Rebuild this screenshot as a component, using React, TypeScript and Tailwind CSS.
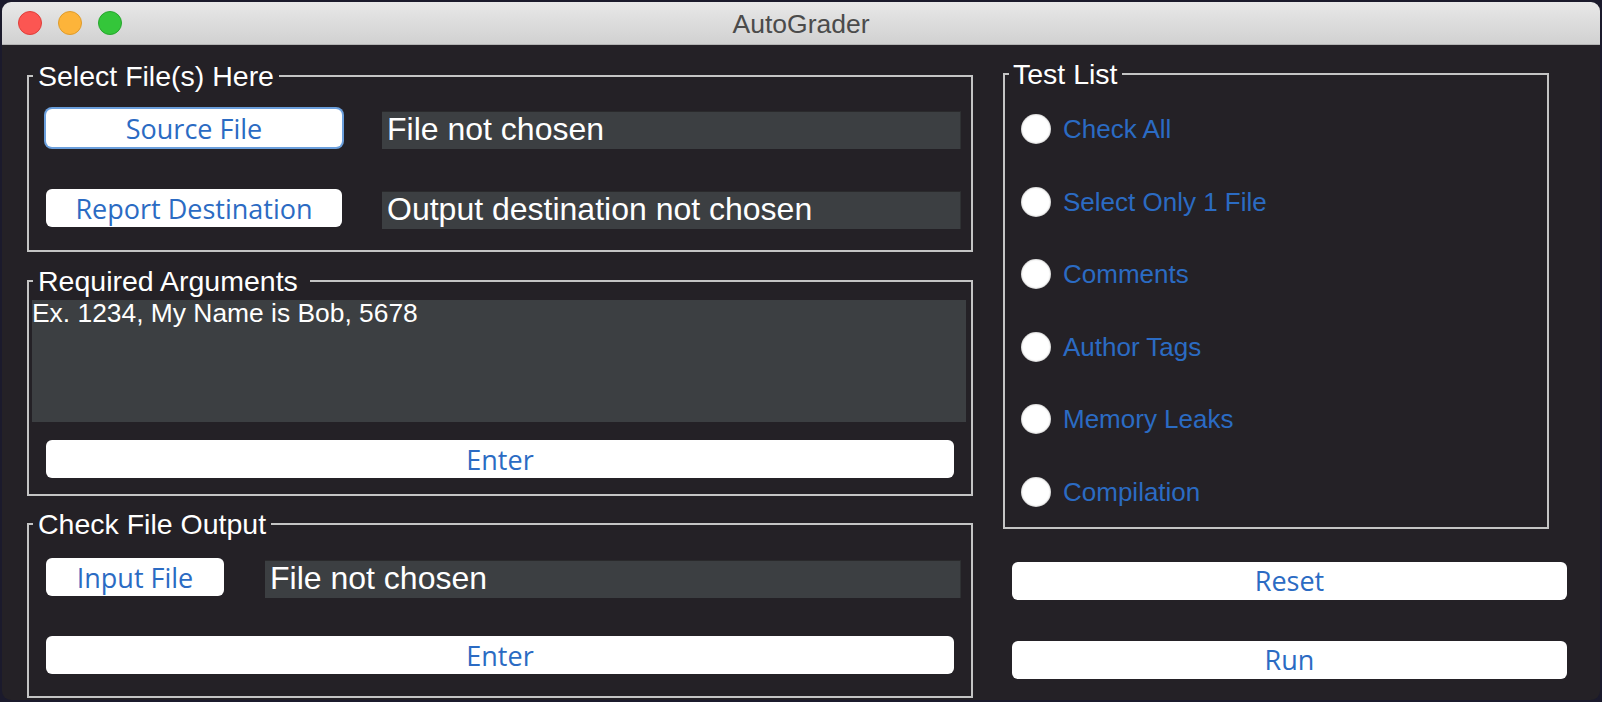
const sans = "font-['Liberation_Sans',Arial,sans-serif]";
const lucida = "font-['Open_Sans','DejaVu_Sans',sans-serif]";

const tests = ['Check All', 'Select Only 1 File', 'Comments', 'Author Tags', 'Memory Leaks', 'Compilation'];

function MacButton({ label, className = '', focused = false }: { label: string; className?: string; focused?: boolean }) {
  return (
    <button
      className={`h-[38px] bg-white rounded-[6px] flex items-center justify-center text-[#2b6bc3] text-[27px] leading-none ${lucida} ${
        focused ? 'ring-2 ring-[#6b9fdc]' : ''
      } ${className}`}
    >
      {label}
    </button>
  );
}

function Field({ text, className = '' }: { text: string; className?: string }) {
  return (
    <div
      className={`h-[38px] bg-[#3c3f42] border-t border-[#2a2a2c] border-r border-r-[#2f3133] pl-[5px] pt-[1px] text-white text-[32px] leading-none whitespace-nowrap ${sans} ${className}`}
    >
      {text}
    </div>
  );
}

function Group({ title, children, className = '', titlePad = 'pl-[5px] pr-[5px]' }: { title: string; children: React.ReactNode; className?: string; titlePad?: string }) {
  return (
    <fieldset className={`border-2 border-[#c4c4c4] p-0 m-0 min-w-0 ${className}`}>
      <legend className={`ml-[4px] ${titlePad} text-[28.5px] leading-[32px] text-white ${sans}`}>{title}</legend>
      {children}
    </fieldset>
  );
}

export default function App() {
  return (
    <div className="w-[1602px] h-[702px] bg-[#1b1a2c] pt-[2px] px-[2px] overflow-hidden">
      <div className="h-[698px] rounded-[9px] overflow-hidden bg-[#242126] flex flex-col">
        {/* Title bar */}
        <div className="relative h-[43px] shrink-0 bg-gradient-to-b from-[#e8e8e8] to-[#d1d1d1] border-b border-[#b3b3b3] flex items-center">
          <div className="flex items-center gap-[16px] pl-[16px]">
            <span className="w-[24px] h-[24px] rounded-full bg-[#fc5652] border border-[#df3e3a]" />
            <span className="w-[24px] h-[24px] rounded-full bg-[#fdb43a] border border-[#de9b2c]" />
            <span className="w-[24px] h-[24px] rounded-full bg-[#34c63a] border border-[#27a52e]" />
          </div>
          <div className={`absolute inset-0 pt-[3px] flex items-center justify-center text-[26.5px] text-[#4b4b4b] ${sans}`}>AutoGrader</div>
        </div>

        {/* Body */}
        <div className="flex items-start pl-[25px] pt-[15px] gap-[30px]">
          {/* Left column */}
          <div className="w-[946px] flex flex-col">
            <Group title="Select File(s) Here">
              <div className="pt-[17px] pb-[21px] pl-[17px] pr-[10px] flex flex-col gap-[40px]">
                <div className="flex items-start">
                  <MacButton label="Source File" focused className="w-[296px]" />
                  <Field text="File not chosen" className="ml-[40px] mt-[2px] flex-1" />
                </div>
                <div className="flex items-start">
                  <MacButton label="Report Destination" className="w-[296px]" />
                  <Field text="Output destination not chosen" className="ml-[40px] mt-[2px] flex-1" />
                </div>
              </div>
            </Group>

            <Group title="Required Arguments" titlePad="pl-[5px] pr-[12px]" className="mt-[13px]">
              <div className="pt-[3px] pb-[16px] pl-[3px] pr-[5px] flex flex-col">
                <div className={`h-[122px] bg-[#3c3f42] text-white text-[26.4px] leading-none ${sans}`}>
                  Ex. 1234, My Name is Bob, 5678
                </div>
                <MacButton label="Enter" className="mt-[18px] ml-[14px] w-[908px]" />
              </div>
            </Group>

            <Group title="Check File Output" className="mt-[12px]">
              <div className="pt-[18px] pb-[22px] pl-[17px] pr-[10px] flex flex-col">
                <div className="flex items-start">
                  <MacButton label="Input File" className="w-[178px]" />
                  <Field text="File not chosen" className="ml-[41px] mt-[2px] flex-1" />
                </div>
                <MacButton label="Enter" className="mt-[38px] w-[908px]" />
              </div>
            </Group>
          </div>

          {/* Right column */}
          <div className="w-[564px] -mt-[2px] flex flex-col">
            <Group title="Test List" titlePad="pl-[4px] pr-[4px]" className="w-[546px]">
              <div className="pt-[24px] pb-[20px] pl-[16px] flex flex-col gap-[42.6px]">
                {tests.map((t) => (
                  <div key={t} className="h-[30px] flex items-center">
                    <span className="w-[30px] h-[30px] rounded-full bg-white shadow-[inset_0_0_2px_rgba(0,0,0,0.45)] shrink-0" />
                    <span className={`ml-[12px] whitespace-nowrap text-[26px] leading-none text-[#2b6bc3] ${sans}`}>{t}</span>
                  </div>
                ))}
              </div>
            </Group>
            <div className="pl-[9px] flex flex-col">
              <MacButton label="Reset" className="mt-[33px] w-[555px]" />
              <MacButton label="Run" className="mt-[41px] w-[555px]" />
            </div>
          </div>
        </div>
      </div>
    </div>
  );
}
